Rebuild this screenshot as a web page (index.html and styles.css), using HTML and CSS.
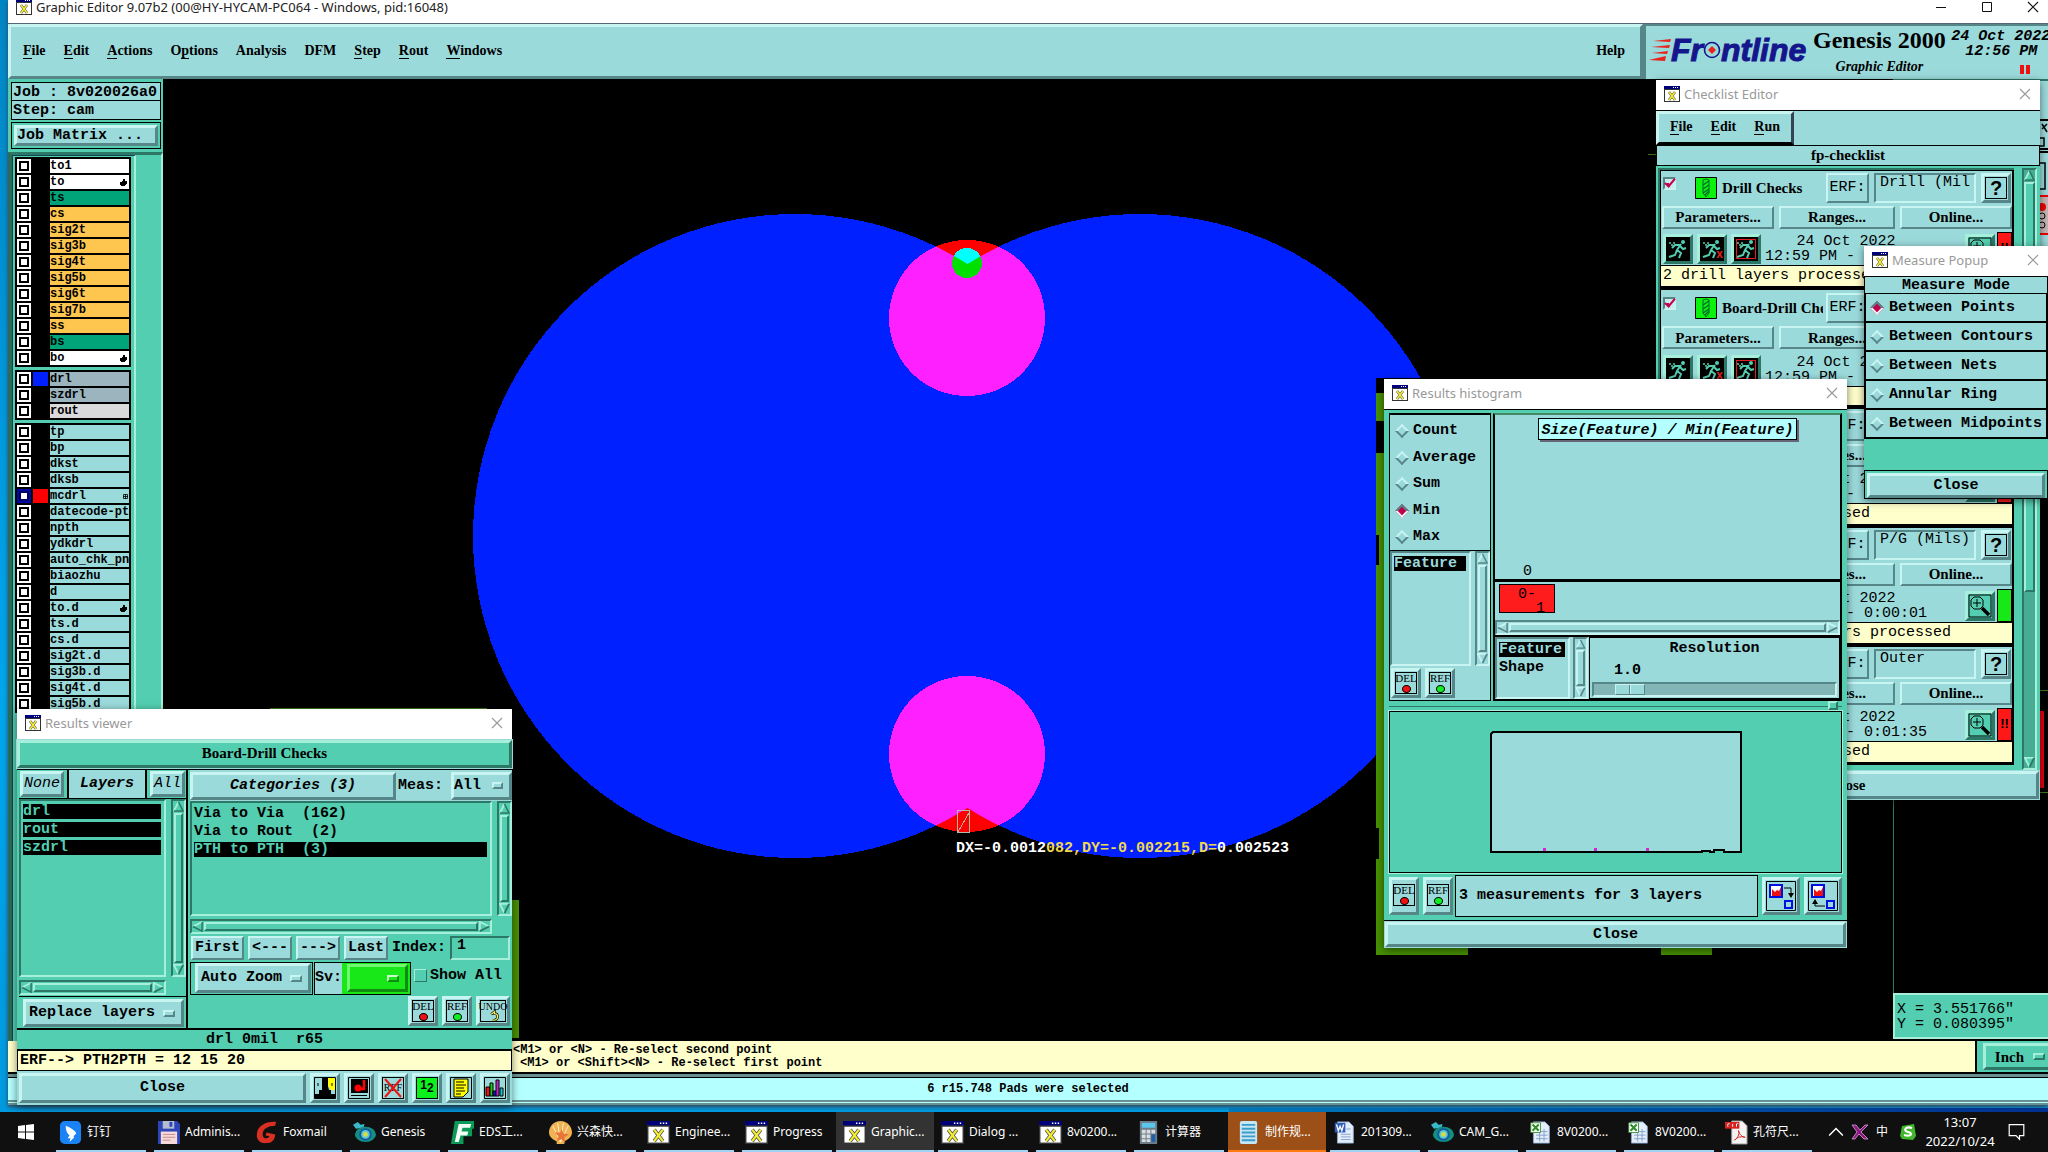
FILE: index.html
```html
<!DOCTYPE html>
<html lang="en">
<head>
<meta charset="utf-8">
<title>Graphic Editor 9.07b2</title>
<link rel="stylesheet" href="styles.css">
</head>
<body>
<svg class="defs" aria-hidden="true">
  <symbol id="xwin" viewBox="0 0 16 16"><path d="M0 0h16v16H0z" fill="#333"/><path d="M1 4h14v11H1z" fill="#fff"/><path d="M0 0h16v3H0z" fill="#00007c"/><path d="M9 1h1v1H9zM11 1h1v1h-1zM13 1h1v1h-1z" fill="#fff"/><path d="M5 6l6 8M11 6l-6 8" stroke="#555" stroke-width="2.600"/><path d="M5 6l6 8M11 6l-6 8" stroke="#f5ee30" stroke-width="1.500"/></symbol>
  <symbol id="close" viewBox="0 0 12 12"><path d="M1 1l10 10M11 1L1 11" stroke="currentColor" stroke-width="1.1" fill="none"/></symbol>
  <symbol id="up" viewBox="0 0 12 12"><path d="M6 1L1 11H11z" fill="var(--face)"/><path d="M6 1L1 11" stroke="var(--lite)" stroke-width="2"/><path d="M1 11H11L6 1" stroke="var(--dark)" stroke-width="1.6" fill="none"/></symbol>
  <symbol id="down" viewBox="0 0 12 12"><path d="M1 1H11L6 11z" fill="var(--face)"/><path d="M6 11L1 1H11" stroke="var(--lite)" stroke-width="2" fill="none"/><path d="M11 1L6 11" stroke="var(--dark)" stroke-width="2"/></symbol>
  <symbol id="left" viewBox="0 0 12 12"><path d="M1 6L11 1V11z" fill="var(--face)"/><path d="M1 6L11 1" stroke="var(--lite)" stroke-width="2"/><path d="M1 6L11 11V1" stroke="var(--dark)" stroke-width="1.6" fill="none"/></symbol>
  <symbol id="right" viewBox="0 0 12 12"><path d="M11 6L1 1V11z" fill="var(--face)"/><path d="M1 11V1L11 6" stroke="var(--lite)" stroke-width="2" fill="none"/><path d="M1 11L11 6" stroke="var(--dark)" stroke-width="2"/></symbol>
  <symbol id="hand" viewBox="0 0 7 8"><path d="M3 0h2v2h2v3H6v1H5v1H1V6H0V3h2V2h1z"/></symbol>
  <symbol id="drill" viewBox="0 0 22 22"><path d="M.5.5h21v21H.5z" fill="#0cf20c" stroke="#000"/><path d="M8 3l3-1 3 1v13l-3 4-3-4z" fill="#0cf20c" stroke="#063"/><path d="M8 8l6-4M8 12l6-4M8 16l6-4M10 18l4-4" stroke="#063" stroke-width="1.3"/></symbol>
  <symbol id="runner" viewBox="0 0 24 24"><path d="M0 0h24v24H0z"/><circle cx="17" cy="5" r="2" fill="#54ceb0"/><path d="M15 7l-4 6 4 3-2 5M11 13l-2 5-6 2M14 8l-5 0-3 3M14 9l3 3 3-1" stroke="#54ceb0" stroke-width="2" fill="none"/><path d="M3 6h2M7 6h2M5 8h2" stroke="#54ceb0" stroke-width="1.4"/></symbol>
  <symbol id="zoomer" viewBox="0 0 24 24"><path d="M1 1h22v22H1z" fill="#54ceb0" stroke="#000"/><path d="M6 3h6l3 3v6l-3 3H6l-3-3V6z" fill="none" stroke="#000"/><path d="M9 5v8M5 9h8" stroke="#000"/><path d="M14 14l7 7" stroke="#000" stroke-width="3.5"/></symbol>
  <symbol id="cam" viewBox="0 0 24 24"><path d="M0 4l5-3 3 3 4-1-1 4-8 1z" fill="#3ab7c8"/><ellipse cx="13" cy="14" rx="11" ry="8" fill="#128f80"/><circle cx="13" cy="14" r="6.5" fill="#1657a0"/><circle cx="13" cy="14" r="4.5" fill="#59c8d8"/><circle cx="13" cy="14" r="2.5" fill="#d9df3a"/></symbol>
  <symbol id="xls" viewBox="0 0 24 26"><path d="M4 1h13l5 5v19H4z" fill="#e4eefa" stroke="#8ba6cc"/><path d="M7 12h13M7 16h13M7 20h13M11 9v14M16 9v14" stroke="#7d9cc9"/><path d="M1 2h11v11H1z" fill="#fff" stroke="#3d8a38"/><path d="M3 4l7 7M10 4l-7 7" stroke="#2f8f2a" stroke-width="2.4"/></symbol>
</svg>

<div class="desktop">
<main class="app">
  <header class="titlebar main-title">
    <svg class="wicon"><use href="#xwin"/></svg><span>Graphic Editor 9.07b2 (00@HY-HYCAM-PC064 - Windows, pid:16048)</span>
    <div class="caption">
      <button aria-label="Minimize"><svg viewBox="0 0 12 12"><path d="M1 6.5h10" stroke="#111"/></svg></button>
      <button aria-label="Maximize"><svg viewBox="0 0 12 12"><path d="M1.500 1.500h9v9h-9z" stroke="#111" fill="none"/></svg></button>
      <button aria-label="Close"><svg><use href="#close"/></svg></button>
    </div>
  </header>
  <div class="toprow">
    <nav class="menubar">
      <a href="#"><u>F</u>ile</a><a href="#"><u>E</u>dit</a><a href="#"><u>A</u>ctions</a><a href="#">O<u>p</u>tions</a><a href="#">Analysis</a><a href="#">DFM</a><a href="#"><u>S</u>tep</a><a href="#"><u>R</u>out</a><a href="#"><u>W</u>indows</a>
      <a href="#" class="help">Help</a>
    </nav>
    <div class="brand">
      <div class="logo"><svg class="speed" viewBox="0 0 22 24"><path d="M4 3L22 1l-1 3zM2 9l19-2-1 3zM3 15l16-2-1 3zM0 22l17-4-1 5z" fill="#e8231c"/></svg><span>Fr</span><svg class="target" viewBox="0 0 18 20"><circle cx="9" cy="10" r="7.500" fill="none" stroke="#15158c" stroke-width="1.600"/><path d="M9 6l4 4-4 4-4-4z" fill="#e8231c"/></svg><span>ntline</span></div>
      <div class="product"><strong>Genesis 2000</strong><em>Graphic Editor</em></div>
      <div class="stamp"><span>24 Oct 2022</span><span class="r">12:56 PM</span><i class="pause"></i></div>
    </div>
  </div>
  <div class="work">
    <aside class="side">
      <div class="jobbox">Job : 8v020026a0</div>
      <div class="jobbox">Step: cam</div>
      <div class="matrix"><button class="btn">Job Matrix ...</button></div>
      <div class="layerpane">
        <div class="layers">
          <ul>
            <li class="w"><input type="checkbox" aria-label="to1"><i></i><span>to1</span></li>
            <li class="w"><input type="checkbox" aria-label="to"><i></i><span>to<svg class="hand"><use href="#hand"/></svg></span></li>
            <li class="g"><input type="checkbox" aria-label="ts"><i></i><span>ts</span></li>
            <li class="o"><input type="checkbox" aria-label="cs"><i></i><span>cs</span></li>
            <li class="o"><input type="checkbox" aria-label="sig2t"><i></i><span>sig2t</span></li>
            <li class="o"><input type="checkbox" aria-label="sig3b"><i></i><span>sig3b</span></li>
            <li class="o"><input type="checkbox" aria-label="sig4t"><i></i><span>sig4t</span></li>
            <li class="o"><input type="checkbox" aria-label="sig5b"><i></i><span>sig5b</span></li>
            <li class="o"><input type="checkbox" aria-label="sig6t"><i></i><span>sig6t</span></li>
            <li class="o"><input type="checkbox" aria-label="sig7b"><i></i><span>sig7b</span></li>
            <li class="o"><input type="checkbox" aria-label="ss"><i></i><span>ss</span></li>
            <li class="g"><input type="checkbox" aria-label="bs"><i></i><span>bs</span></li>
            <li class="w"><input type="checkbox" aria-label="bo"><i></i><span>bo<svg class="hand"><use href="#hand"/></svg></span></li>
          </ul>
          <ul>
            <li class="s blue"><input type="checkbox" aria-label="drl"><i></i><span>drl</span></li>
            <li class="s"><input type="checkbox" aria-label="szdrl"><i></i><span>szdrl</span></li>
            <li class="l"><input type="checkbox" aria-label="rout"><i></i><span>rout</span></li>
          </ul>
          <ul>
            <li><input type="checkbox" aria-label="tp"><i></i><span>tp</span></li>
            <li><input type="checkbox" aria-label="bp"><i></i><span>bp</span></li>
            <li><input type="checkbox" aria-label="dkst"><i></i><span>dkst</span></li>
            <li><input type="checkbox" aria-label="dksb"><i></i><span>dksb</span></li>
            <li class="red"><input type="checkbox" checked aria-label="mcdrl"><i></i><span>mcdrl<svg class="snap" viewBox="0 0 5 5"><path d="M.5.5h4v4h-4zM2.500 0v5M0 2.500h5" fill="none" stroke="#000" stroke-width=".8"/></svg></span></li>
            <li><input type="checkbox" aria-label="datecode-ptd"><i></i><span>datecode-ptd</span></li>
            <li><input type="checkbox" aria-label="npth"><i></i><span>npth</span></li>
            <li><input type="checkbox" aria-label="ydkdrl"><i></i><span>ydkdrl</span></li>
            <li><input type="checkbox" aria-label="auto_chk_pnl"><i></i><span>auto_chk_pnl</span></li>
            <li><input type="checkbox" aria-label="biaozhu"><i></i><span>biaozhu</span></li>
            <li><input type="checkbox" aria-label="d"><i></i><span>d</span></li>
            <li><input type="checkbox" aria-label="to.d"><i></i><span>to.d<svg class="hand"><use href="#hand"/></svg></span></li>
            <li><input type="checkbox" aria-label="ts.d"><i></i><span>ts.d</span></li>
            <li><input type="checkbox" aria-label="cs.d"><i></i><span>cs.d</span></li>
            <li><input type="checkbox" aria-label="sig2t.d"><i></i><span>sig2t.d</span></li>
            <li><input type="checkbox" aria-label="sig3b.d"><i></i><span>sig3b.d</span></li>
            <li><input type="checkbox" aria-label="sig4t.d"><i></i><span>sig4t.d</span></li>
            <li><input type="checkbox" aria-label="sig5b.d"><i></i><span>sig5b.d</span></li>
          </ul>
        </div>
      </div>
    </aside>
    <section class="canvas">
      <svg class="board" shape-rendering="crispEdges">
        <defs><clipPath id="pads"><circle cx="795" cy="536" r="322"/><circle cx="1140" cy="536" r="322"/></clipPath></defs>
        <g transform="translate(-163 -79)">
          <g fill="#0020ff"><circle cx="795" cy="536" r="322"/><circle cx="1140" cy="536" r="322"/></g>
          <g fill="#f00"><circle cx="967" cy="318" r="78"/><circle cx="967" cy="754" r="78"/></g>
          <g fill="#ff20ff" clip-path="url(#pads)"><circle cx="967" cy="318" r="78"/><circle cx="967" cy="754" r="78"/></g>
          <circle cx="967" cy="263" r="15" fill="#0ff"/><circle cx="967" cy="263" r="15" fill="#00e000" clip-path="url(#pads)"/>
          <path d="M957.500 810.500h12v22h-12zM958 832l12-21" fill="none" stroke="#b8b8a0"/>
          <path d="M1376 378h300v577h-300z" fill="#000"/>
          <path d="M1376 393h300v28h-300zM1376 453h300v82h-300zM1379 535h300v30h-300zM1376 565h300v263h-300zM1379 828h300v31h-300zM1376 859h92v96h-92zM1661 859h51v96h-51zM512 900h7v138h-7z" fill="#469000"/>
          <path d="M270 708.500h217M1648 154.500h10M2040 690.500h8M2040 792.500h8" stroke="#3c7818"/>
          <path d="M2038 711h6v77h-6z" fill="#e00010"/>
        </g>
      </svg>
      <p class="readout">DX=-0.0012<span>082,DY=-0.002215,D=</span>0.002523</p>
      <div class="rightcol">
        <div class="tools">
          <div class="toolgap"></div>
          <svg viewBox="0 0 8 126"><path d="M0 1h8M0 30h8M0 33h8" stroke="#000" stroke-width="2"/><path d="M2 10l5-5M2 5l5 8M0 19h4v8H0M0 44h5v26H0" fill="none" stroke="#000" stroke-width="1.500"/><path d="M0 76h8v39H0z" fill="#c4b4b4"/><path d="M0 77h8M0 115h8" stroke="#e00" stroke-width="2"/><circle cx="2" cy="88" r="4" fill="#e00"/><circle cx="2" cy="97" r="3" fill="none" stroke="#000"/><circle cx="2" cy="106" r="3" fill="none" stroke="#000"/></svg>
        </div>
        <div class="overview"></div>
        <div class="coords"><span>X = 3.551766"</span><span>Y = 0.080395"</span></div>
      </div>
    </section>
  </div>
  <div class="msgrow">
    <div class="messages"><span>&lt;M1&gt; or &lt;N&gt; - Re-select second point</span><span class="second">&lt;M1&gt; or &lt;Shift&gt;&lt;N&gt; - Re-select first point</span></div>
    <div class="units teal"><button class="btn opt">Inch<i></i></button></div>
  </div>
  <div class="status">6 r15.748 Pads were selected</div>
</main>

<section class="win checklist">
  <header class="titlebar"><svg class="wicon"><use href="#xwin"/></svg><span>Checklist Editor</span><button aria-label="Close"><svg><use href="#close"/></svg></button></header>
  <div class="clmenu"><nav><a href="#"><u>F</u>ile</a><a href="#"><u>E</u>dit</a><a href="#"><u>R</u>un</a></nav></div>
  <h2>fp-checklist</h2>
  <div class="clbody">
    <div class="items">
      <article>
        <div class="r1"><input type="checkbox" checked aria-label="Drill Checks"><svg class="drill"><use href="#drill"/></svg><b>Drill Checks</b><button class="btn">ERF:</button><input class="field" value="Drill (Mil" aria-label="ERF model"><button class="btn help"><span>?</span></button></div>
        <div class="r2"><button class="btn">Parameters...</button><button class="btn">Ranges...</button><button class="btn">Online...</button></div>
        <div class="r3"><button class="btn teal" aria-label="Run"><svg><use href="#runner"/></svg></button><button class="btn teal k1" aria-label="Run on area"><svg><use href="#runner"/></svg></button><button class="btn teal k2" aria-label="Run on profile"><svg><use href="#runner"/></svg></button><p>24 Oct 2022<br>12:59 PM - 0:00:01</p><button class="btn teal" aria-label="View results"><svg><use href="#zoomer"/></svg></button><i class="bad">!!</i></div>
        <div class="r4">2 drill layers processed</div>
      </article>
      <article>
        <div class="r1"><input type="checkbox" checked aria-label="Board-Drill Checks"><svg class="drill"><use href="#drill"/></svg><b>Board-Drill Checks</b><button class="btn">ERF:</button><input class="field" value="Outer" aria-label="ERF model"><button class="btn help"><span>?</span></button></div>
        <div class="r2"><button class="btn">Parameters...</button><button class="btn">Ranges...</button><button class="btn">Online...</button></div>
        <div class="r3"><button class="btn teal" aria-label="Run"><svg><use href="#runner"/></svg></button><button class="btn teal k1" aria-label="Run on area"><svg><use href="#runner"/></svg></button><button class="btn teal k2" aria-label="Run on profile"><svg><use href="#runner"/></svg></button><p>24 Oct 2022<br>12:59 PM - 0:00:03</p><button class="btn teal" aria-label="View results"><svg><use href="#zoomer"/></svg></button><i class="bad">!!</i></div>
        <div class="r4"></div>
      </article>
      <article>
        <div class="r1"><input type="checkbox" checked aria-label="Signal Checks"><svg class="drill"><use href="#drill"/></svg><b></b><button class="btn">ERF:</button><input class="field" value="" aria-label="ERF model"><button class="btn help"><span>?</span></button></div>
        <div class="r2"><button class="btn">Parameters...</button><button class="btn">Ranges...</button><button class="btn">Online...</button></div>
        <div class="r3"><button class="btn teal" aria-label="Run"><svg><use href="#runner"/></svg></button><button class="btn teal k1" aria-label="Run on area"><svg><use href="#runner"/></svg></button><button class="btn teal k2" aria-label="Run on profile"><svg><use href="#runner"/></svg></button><p>24 Oct 2022<br>12:59 PM - 0:00:07</p><button class="btn teal" aria-label="View results"><svg><use href="#zoomer"/></svg></button><i class="bad">!!</i></div>
        <div class="r4">signal layers processed</div>
      </article>
      <article>
        <div class="r1"><input type="checkbox" checked aria-label="P/G Checks"><svg class="drill"><use href="#drill"/></svg><b></b><button class="btn">ERF:</button><input class="field" value="P/G (Mils)" aria-label="ERF model"><button class="btn help"><span>?</span></button></div>
        <div class="r2"><button class="btn">Parameters...</button><button class="btn">Ranges...</button><button class="btn">Online...</button></div>
        <div class="r3"><button class="btn teal" aria-label="Run"><svg><use href="#runner"/></svg></button><button class="btn teal k1" aria-label="Run on area"><svg><use href="#runner"/></svg></button><button class="btn teal k2" aria-label="Run on profile"><svg><use href="#runner"/></svg></button><p>24 Oct 2022<br>12:59 PM - 0:00:01</p><button class="btn teal" aria-label="View results"><svg><use href="#zoomer"/></svg></button><i class="good"></i></div>
        <div class="r4">No power-ground layers processed</div>
      </article>
      <article>
        <div class="r1"><input type="checkbox" checked aria-label="Mask Checks"><svg class="drill"><use href="#drill"/></svg><b></b><button class="btn">ERF:</button><input class="field" value="Outer" aria-label="ERF model"><button class="btn help"><span>?</span></button></div>
        <div class="r2"><button class="btn">Parameters...</button><button class="btn">Ranges...</button><button class="btn">Online...</button></div>
        <div class="r3"><button class="btn teal" aria-label="Run"><svg><use href="#runner"/></svg></button><button class="btn teal k1" aria-label="Run on area"><svg><use href="#runner"/></svg></button><button class="btn teal k2" aria-label="Run on profile"><svg><use href="#runner"/></svg></button><p>24 Oct 2022<br>12:59 PM - 0:01:35</p><button class="btn teal" aria-label="View results"><svg><use href="#zoomer"/></svg></button><i class="bad">!!</i></div>
        <div class="r4">2 mask layers processed</div>
      </article>
    </div>
    <div class="vsb teal tall"><svg><use href="#up"/></svg><i></i><svg class="end"><use href="#down"/></svg></div>
  </div>
  <button class="btn wclose">Close</button>
</section>

<section class="win measure">
  <header class="titlebar"><svg class="wicon"><use href="#xwin"/></svg><span>Measure Popup</span><button aria-label="Close"><svg><use href="#close"/></svg></button></header>
  <h2>Measure Mode</h2>
  <label><input type="radio" name="mm" checked>Between Points</label>
  <label><input type="radio" name="mm">Between Contours</label>
  <label><input type="radio" name="mm">Between Nets</label>
  <label><input type="radio" name="mm">Annular Ring</label>
  <label><input type="radio" name="mm">Between Midpoints</label>
  <div class="mclose"><button class="btn">Close</button></div>
</section>

<section class="win histo">
  <header class="titlebar"><svg class="wicon"><use href="#xwin"/></svg><span>Results histogram</span><button aria-label="Close"><svg><use href="#close"/></svg></button></header>
  <div class="hbody">
    <div class="htop">
      <div class="hleft">
        <div class="radios">
          <label><input type="radio" name="agg">Count</label>
          <label><input type="radio" name="agg">Average</label>
          <label><input type="radio" name="agg">Sum</label>
          <label><input type="radio" name="agg" checked>Min</label>
          <label><input type="radio" name="agg">Max</label>
        </div>
        <div class="hlist"><ul class="sunk"><li class="sel">Feature</li></ul><div class="vsb"><svg><use href="#up"/></svg><i></i><svg><use href="#down"/></svg></div></div>
        <div class="tags"><button class="btn tag del"><span>DEL</span></button><button class="btn tag ref"><span>REF</span></button></div>
      </div>
      <div class="hright">
        <div class="chart"><em>Size(Feature) / Min(Feature)</em><span>0</span></div>
        <div class="axis"><div>0-<br>&nbsp; 1</div></div>
        <div class="hsb"><svg><use href="#left"/></svg><i></i><svg><use href="#right"/></svg></div>
        <div class="hlow">
          <ul class="sunk"><li class="sel">Feature</li><li>Shape</li></ul>
          <div class="vsb"><svg><use href="#up"/></svg><i></i><svg><use href="#down"/></svg></div>
          <div class="reso"><label for="res">Resolution</label><output>1.0</output><input id="res" type="range" min="0" max="10" value="1"></div>
        </div>
      </div>
    </div>
    <div class="sash"><i></i></div>
    <div class="map"><svg viewBox="0 0 252 122"><path d="M3 1h248v120h-17v-2h-10v2h-4v-1h-8v1H1V3z" fill="#9bdadb" stroke="#000" stroke-width="2"/><path d="M53 117h3v3h-3zM104 117h3v3h-3zM156 117h3v3h-3z" fill="#d028d0"/></svg></div>
    <div class="hfoot"><button class="btn tag del"><span>DEL</span></button><button class="btn tag ref"><span>REF</span></button><p>3 measurements for 3 layers</p>
      <button class="btn ic" aria-label="Next"><svg viewBox="0 0 30 30"><path d="M.5.5h29v29H.5z" fill="none" stroke="#000"/><path d="M4 4h12v12H4z" fill="#fff" stroke="#0010e0" stroke-width="2"/><path d="M6 15V8l3 3 2-2 2 1 2-4v9z" fill="#e11"/><path d="M19 20h7v7h-7z" fill="none" stroke="#0010e0" stroke-width="2"/><path d="M18 7h7v8" fill="none" stroke="#000"/><path d="M22 12l3 5 3-5z"/></svg></button>
      <button class="btn ic" aria-label="Previous"><svg viewBox="0 0 30 30"><path d="M.5.5h29v29H.5z" fill="none" stroke="#000"/><path d="M4 4h12v12H4z" fill="#fff" stroke="#0010e0" stroke-width="2"/><path d="M6 15V8l3 3 2-2 2 1 2-4v9z" fill="#e11"/><path d="M19 20h7v7h-7z" fill="none" stroke="#0010e0" stroke-width="2"/><path d="M17 25H7v-5" fill="none" stroke="#000"/><path d="M4 23l3-5 3 5z"/></svg></button>
    </div>
  </div>
  <button class="btn wclose">Close</button>
</section>

<section class="win viewer teal">
  <header class="titlebar"><svg class="wicon"><use href="#xwin"/></svg><span>Results viewer</span><button aria-label="Close"><svg><use href="#close"/></svg></button></header>
  <h2>Board-Drill Checks</h2>
  <div class="vbody">
    <div class="vleft">
      <div class="vhead"><button class="btn cy it">None</button><em>Layers</em><button class="btn cy it">All</button></div>
      <div class="vlist"><ul class="sunk"><li class="sel">drl</li><li class="sel">rout</li><li class="sel">szdrl</li></ul><div class="vsb"><svg><use href="#up"/></svg><i></i><svg><use href="#down"/></svg></div></div>
      <div class="hsb"><svg><use href="#left"/></svg><i></i><svg><use href="#right"/></svg></div>
      <div class="vrep"><button class="btn cy opt">Replace layers<i></i></button></div>
    </div>
    <div class="vright">
      <div class="chead cyan"><button class="btn cat"><em>Categories (3)</em></button><span>Meas:</span><button class="btn opt">All<i></i></button></div>
      <div class="vlist"><ul class="sunk"><li>Via to Via&nbsp; (162)</li><li>Via to Rout&nbsp; (2)</li><li class="sel">PTH to PTH&nbsp; (3)</li></ul><div class="vsb"><svg><use href="#up"/></svg><i></i><svg><use href="#down"/></svg></div></div>
      <div class="hsb"><svg><use href="#left"/></svg><i></i><svg><use href="#right"/></svg></div>
      <div class="navrow"><button class="btn cy">First</button><button class="btn cy">&lt;---</button><button class="btn cy">---&gt;</button><button class="btn cy">Last</button><label for="idx">Index:</label><input id="idx" class="field" value="1"></div>
      <div class="zoomrow"><div class="cell az"><button class="btn cy opt">Auto Zoom<i></i></button></div><div class="cell sv cyan"><span>Sv:</span><div class="lime"><button class="btn opt" aria-label="Severity"><i></i></button></div></div><label><input type="checkbox">Show All</label></div>
      <div class="tags"><button class="btn cy tag del"><span>DEL</span></button><button class="btn cy tag ref"><span>REF</span></button><button class="btn cy tag undo"><span>UNDO</span><svg viewBox="0 0 10 12"><path d="M1 4l4-3v2c5 0 5 7 0 8H3" fill="none" stroke="#000" stroke-width="3"/><path d="M1 4l4-3v2c5 0 5 7 0 8H3" fill="none" stroke="#f2f25a" stroke-width="1.500"/></svg></button></div>
    </div>
  </div>
  <p class="info">drl 0mil&nbsp; r65</p>
  <p class="erf">ERF--&gt; PTH2PTH = 12 15 20</p>
  <footer class="cyan">
    <button class="btn close">Close</button>
    <button class="btn" aria-label="Contrast"><svg viewBox="0 0 22 22"><path d="M.5.5h21v21H.5z" fill="#9bdadb" stroke="#000"/><path d="M8 1h6v20H1v-4h4v-4h3z"/><path d="M14 1h7v12h-4l-3-4z" fill="#ff0"/><path d="M5 17h12v-4h-2l-2-7h-3l-2 7H6zM1 17h20v4H1z"/><path d="M4 6v3M18 6v3" stroke="#000"/></svg></button>
    <button class="btn" aria-label="Detail"><svg viewBox="0 0 22 22"><path d="M.5.5h21v21H.5z" fill="#9bdadb" stroke="#000"/><path d="M3 2h17v14H3z"/><circle cx="10" cy="11" r="3.500" fill="#f00"/><path d="M9 12h7V3" stroke="#f00" stroke-width="2.500" fill="none"/><path d="M3 18.500h16" stroke="#000"/></svg></button>
    <button class="btn strike" aria-label="Clear reference"><span>REF</span><svg viewBox="0 0 22 22"><path d="M3 2l16 18M19 2L3 20" stroke="#e11" stroke-width="2"/></svg></button>
    <button class="btn num" aria-label="Report counts"><span>1<sub>2</sub></span></button>
    <button class="btn" aria-label="Notes"><svg viewBox="0 0 22 22"><path d="M.5.500h21v21H.5z" fill="none" stroke="#000"/><path d="M4 2h14v13l-5 5H4z" fill="#ff0" stroke="#000"/><path d="M6 5h8M6 8h10M6 11h8M6 14h9M6 17h5" stroke="#000"/></svg></button>
    <button class="btn" aria-label="Histogram"><svg viewBox="0 0 22 22"><path d="M.5.500h21v21H.5z" fill="none" stroke="#000"/><path d="M2 10h4v9H2z" fill="#e11" stroke="#000"/><path d="M6 6h3v13H6z" fill="#1c1" stroke="#000"/><path d="M9 14h3v5H9z" fill="#11d" stroke="#000"/><path d="M12 3h3v16h-3z" fill="#c2c" stroke="#000"/><path d="M16 11h3v8h-3z" fill="#1cc" stroke="#000"/></svg></button>
  </footer>
</section>

<footer class="taskbar">
  <button class="start" aria-label="Start"><svg viewBox="0 0 16 16"><path d="M0 2l7-1v6.500H0zM8 1l8-1v7.500H8zM0 8.500h7V15l-7-1zM8 8.500h8V16l-8-1z" fill="#fff"/></svg></button>
  <button class="task"><svg viewBox="0 0 24 24"><rect x="1" width="22" height="24" rx="5" fill="#1b82f5"/><path d="M7 5c5 2 10 5 11 8l-3 3 1 1-5 5 1-4H9l2-3c-3-2-4-6-4-10z" fill="#fff"/></svg><span>钉钉</span></button>
  <button class="task"><svg viewBox="0 0 24 24"><path d="M1 0h20l3 3v21H1z" fill="#2c44b8"/><path d="M6 0h12v8H6z" fill="#b4bcd0"/><path d="M13 1h3v5h-3z" fill="#2c44b8"/><path d="M4 11h17v13H4z" fill="#f4dada"/><path d="M6 14h13M6 17h13M6 20h8" stroke="#c88"/></svg><span>Adminis...</span></button>
  <button class="task"><svg viewBox="0 0 24 24"><path d="M22 1C12 0 3 5 2 13c-1 7 4 11 10 10 6 0 9-4 9-9l-9-2-1 3 4 1c-1 3-7 3-7-2 0-6 6-9 13-9z" fill="#d93022"/></svg><span>Foxmail</span></button>
  <button class="task"><svg><use href="#cam"/></svg><span>Genesis</span></button>
  <button class="task"><svg viewBox="0 0 24 24"><path d="M4 0h20v8h-2v8h-9v8H0z" fill="#0b9a57"/><path d="M8 3h13l-1 4h-8l-1 4h7l-1 4h-7l-2 7H4z" fill="#f4fff8"/></svg><span>EDS工...</span></button>
  <button class="task"><svg viewBox="0 0 24 24"><path d="M12 0c7 0 12 6 12 12 0 5-5 8-8 9v3H8v-3c-3-1-8-4-8-9C0 6 5 0 12 0z" fill="#f0b253"/><path d="M12 22L4 5M12 22L9 2M12 22l3-20M12 22l8-17" stroke="#fff0c8"/><path d="M13 8l2 5 6 1-5 3 1 6-4-4-5 2 2-5-4-4 6 0z" fill="#e8743a"/></svg><span>兴森快...</span></button>
  <button class="task"><svg><use href="#xwin"/></svg><span>Enginee...</span></button>
  <button class="task"><svg><use href="#xwin"/></svg><span>Progress</span></button>
  <button class="task on"><svg><use href="#xwin"/></svg><span>Graphic...</span></button>
  <button class="task"><svg><use href="#xwin"/></svg><span>Dialog ...</span></button>
  <button class="task"><svg><use href="#xwin"/></svg><span>8v0200...</span></button>
  <button class="task"><svg viewBox="0 0 24 24"><path d="M3 0h18v24H3z" fill="#707c86"/><path d="M5 2h14v5H5z" fill="#5ac8ee"/><path d="M5 9h4v4H5zM10 9h4v4h-4zM15 9h4v4h-4zM5 14h4v4H5zM10 14h4v4h-4zM5 19h4v3H5zM10 19h4v3h-4z" fill="#d8dde2"/><path d="M15 14h4v8h-4z" fill="#1b62a8"/></svg><span>计算器</span></button>
  <button class="task alert"><svg viewBox="0 0 24 24"><rect x="3" width="18" height="24" rx="2" fill="#c5e6f4"/><path d="M5 4h14M5 8h14M5 12h14M5 16h14M5 20h14" stroke="#3b9cc8" stroke-width="2"/></svg><span>制作规...</span></button>
  <button class="task"><svg viewBox="0 0 24 26"><path d="M4 1h13l5 5v19H4z" fill="#e4eefa" stroke="#8ba6cc"/><path d="M8 15h11M8 18h11M8 21h11M14 9h5" stroke="#7d9cc9"/><path d="M1 2h12v11H1z" fill="#2f5fb8"/><path d="M3 4l2 7 2-5 2 5 2-7" stroke="#fff" stroke-width="1.500" fill="none"/></svg><span>201309...</span></button>
  <button class="task"><svg><use href="#cam"/></svg><span>CAM_G...</span></button>
  <button class="task"><svg><use href="#xls"/></svg><span>8V0200...</span></button>
  <button class="task"><svg><use href="#xls"/></svg><span>8V0200...</span></button>
  <button class="task"><svg viewBox="0 0 24 24"><path d="M7 0h11l5 5v19H7z" fill="#f3f3f3" stroke="#999"/><path d="M0 1h15v7H0z" fill="#d8201c"/><path d="M3 6V3h2M8 3v3M12 6V3h2" stroke="#fff"/><path d="M14 10c2 4-2 9-4 10 3-4 8-4 11-3-3 0-6-3-7-7z" fill="none" stroke="#d8201c"/></svg><span>孔符尺...</span></button>
  <div class="tray">
    <svg viewBox="0 0 14 14"><path d="M1 10l6-6 6 6" fill="none" stroke="#fff" stroke-width="1.300"/></svg>
    <svg viewBox="0 0 16 14"><path d="M0 0h4l4 5 5-5h3L9 7l7 7h-4L7 9l-4 5H0l5-7z" fill="#8a1a80" stroke="#d9a0d4" stroke-width=".8"/></svg>
    <span>中</span>
    <svg class="ime" viewBox="0 0 16 16"><path d="M2 2l12-2 2 12-3 4-11-1-2-3z" fill="#42b62c"/><path d="M12 4c-7-2-9 3-4 4s4 5-4 3" fill="none" stroke="#fff" stroke-width="2.200"/></svg>
    <time><span>13:07</span><span>2022/10/24</span></time>
    <svg class="note" viewBox="0 0 16 16"><path d="M.7.7h14.600v11H11v3.500L7.500 11.700H.7z" fill="none" stroke="#fff" stroke-width="1.200"/></svg>
  </div>
</footer>
</div>
</body>
</html>
```
FILE: styles.css
```css
* { box-sizing: border-box; margin: 0; padding: 0; }
:root { --cyan: #9bdadb; --teal: #54ceb0; --cream: #ffffcc; }
body {
  --face: var(--cyan); --lite: #c8f4f2; --dark: #568688;
  font: bold 15px/18px "Liberation Mono", "Courier New", monospace;
  color: #000; background: #000; overflow: hidden;
}
.defs { position: absolute; width: 0; height: 0; }
.teal { --face: var(--teal); --lite: #a6efdb; --dark: #2c7766; background-color: var(--teal); }
.cyan, .cy { --face: var(--cyan); --lite: #c8f4f2; --dark: #568688; background-color: var(--cyan); }
ul { list-style: none; }
a { color: inherit; text-decoration: none; }
u { text-decoration: none; border-bottom: 1px solid #000; }
button, input { font: inherit; color: inherit; }
button { background: none; border: 0; white-space: nowrap; }
svg { display: block; flex: none; overflow: visible; }

.desktop {
  position: relative; height: 100vh; display: flex; flex-direction: column;
  background: linear-gradient(#0085c4, #00a6ee 60%, #0098de);
}
.app {
  flex: 1; min-height: 0; margin: 0 0 7px 8px; display: flex; flex-direction: column;
  background: #000; box-shadow: 0 2px 4px #345;
}
.desktop::after {
  content: ""; position: absolute; left: 60%; right: 0; bottom: 40px; height: 4px;
  background: linear-gradient(90deg, #0078b8, #003090);
}

/* buttons, bars and other shared controls */
.btn {
  background: var(--face); border: 3px solid; padding: 0;
  border-color: var(--lite) var(--dark) var(--dark) var(--lite);
  display: flex; align-items: center; justify-content: center;
}
.opt { justify-content: flex-end; gap: 11px; padding-right: 6px; }
.opt i { width: 12px; height: 7px; border: 2px solid; border-color: var(--lite) var(--dark) var(--dark) var(--lite); }
.sunk { border: 2px solid; border-color: var(--dark) var(--lite) var(--lite) var(--dark); background: var(--face); }
.sunk li { line-height: 15px; margin: 3px 3px 0 2px; white-space: pre; }
.sel { background: #000; color: var(--face); }
.field {
  border: 2px solid; border-color: var(--dark) var(--lite) var(--lite) var(--dark);
  background: var(--face); padding: 0 0 10px 4px; min-width: 0;
}
.vsb, .hsb { display: flex; border: 2px solid; border-color: var(--dark) var(--lite) var(--lite) var(--dark); background: var(--face); }
.vsb { flex-direction: column; width: 15px; flex: none; }
.hsb { height: 15px; }
.vsb svg, .hsb svg { width: 11px; height: 11px; }
.vsb i, .hsb i { flex: 1; margin: 1px; border: 2px solid; border-color: var(--lite) var(--dark) var(--dark) var(--lite); }
.tag { width: 30px; height: 30px; flex-direction: column; justify-content: flex-start; padding: 1px; }
.tag span {
  border: 1px solid #000; width: 22px; height: 22px; font: 11px/11px "Liberation Serif", serif;
  display: flex; flex-direction: column; align-items: center;
}
.tag span::after { content: ""; width: 7px; height: 7px; border-radius: 50%; border: 1px solid #000; background: #e11; margin-top: 1px; }
.ref span::after { background: #1e2; }
.undo { width: 34px; position: relative; }
.undo span { width: 26px; font-size: 10px; }
.undo span::after { display: none; }
.undo svg { position: absolute; left: 11px; top: 12px; width: 9px; height: 10px; }
input[type=radio] {
  appearance: none; width: 10px; height: 10px; transform: rotate(45deg); flex: none;
  border: 2px solid; border-color: var(--lite) var(--dark) var(--dark) var(--lite);
}
input[type=radio]:checked { background: #c0004c; border-color: #568688 #e8f4f4 #e8f4f4 #568688; }

/* window frames */
.titlebar {
  display: flex; align-items: center; height: 31px; padding: 0 9px 2px 8px; background: #fff; color: #999;
  font: 13px/18px "Noto Sans", sans-serif; border-bottom: 1px solid #000;
}
.wicon { width: 16px; height: 16px; margin-right: 4px; }
.titlebar > button { margin-left: auto; width: 12px; height: 12px; }
.titlebar button svg { width: 12px; height: 12px; }
.main-title { height: 24px; color: #222; padding-bottom: 10px; border-color: #567; }
.caption { margin-left: auto; display: flex; gap: 34px; color: #111; }
.win { position: absolute; display: flex; flex-direction: column; background-color: var(--face); box-shadow: 0 2px 8px rgba(0, 0, 0, .5); }
.win h2 { font: bold 15px/20px "Liberation Serif", serif; text-align: center; }

/* main menu and banner */
.toprow { display: flex; height: 55px; background: var(--cyan); font: bold 14px/18px "Liberation Serif", serif; }
.menubar {
  flex: 1; display: flex; align-items: center; gap: 18px; padding: 0 15px 2px 12px;
  border: 3px solid; border-color: var(--lite) var(--dark) var(--dark) var(--lite);
}
.help { margin-left: auto; }
.brand { width: 405px; display: flex; padding: 1px 0 0 3px; border-left: 3px solid var(--dark); border-top: 2px solid var(--dark); overflow: hidden; }
.logo { display: flex; align-items: center; height: 46px; margin-right: 5px; color: #15158c; font: italic bold 32px/40px "Liberation Sans", Arial, sans-serif; -webkit-text-stroke: 1px #15158c; }
.speed { width: 22px; height: 24px; }
.target { width: 18px; height: 20px; }
.product { display: flex; flex-direction: column; align-items: center; width: 136px; flex: none; }
.product strong { font-size: 24px; line-height: 26px; white-space: nowrap; }
.product em { margin-top: 3px; font-size: 14px; line-height: 22px; }
.stamp { margin-left: 4px; padding-top: 2px; font: italic bold 15px/15px "Liberation Mono", monospace; white-space: nowrap; display: flex; flex-direction: column; }
.r { padding-left: 14px; }
.pause { width: 10px; height: 9px; margin: 6px 0 0 69px; border: solid #f01010; border-width: 0 4px; }

/* job and layer column */
.work { flex: 1; min-height: 0; display: flex; background: #000; }
.side { width: 155px; display: flex; flex-direction: column; background: var(--teal); padding-top: 3px; overflow: hidden; }
.jobbox { margin: 0 2px 0 3px; border: 1px solid #000; height: 19px; padding-left: 1px; background: var(--cyan); white-space: nowrap; overflow: hidden; line-height: 19px; }
.jobbox + .jobbox { border-top: 0; line-height: 20px; }
.matrix { margin: 2px 2px 3px 3px; border: 1px solid #000; height: 27px; padding: 2px; flex: none; }
.matrix .btn { width: 100%; height: 21px; justify-content: flex-start; }
.layerpane { flex: 1; min-height: 0; border-top: 3px solid #2c7766; border-left: 4px solid #2c6a5c; border-right: 2px solid #a6efdb; }
.layers { width: 124px; height: 100%; padding: 1px 3px 0 2px; border: solid; border-width: 1px 2px 0 1px; border-color: #145 #a6efdb #145 #145; display: flex; flex-direction: column; gap: 3px; }
.layers ul { background: #000; padding: 2px 2px 0; }
.layers li { display: grid; grid-template-columns: 14px 15px 1fr; column-gap: 2px; height: 14px; margin-bottom: 2px; --c: var(--cyan); }
.layers li span { background: var(--c); font: bold 12px/14px "Liberation Mono", monospace; overflow: hidden; white-space: nowrap; position: relative; }
.layers input { appearance: none; width: 14px; height: 14px; background: #fff; border: 2px solid #fff; outline: 2px solid #000; outline-offset: -4px; }
.layers input:checked { border-color: #0008a8; outline-color: #000060; }
.layers .w { --c: #fff; } .layers .g { --c: #00a478; } .layers .o { --c: #fec64e; }
.layers .s { --c: #9bb4be; } .layers .l { --c: #dadada; }
.blue i { background: #0020ff; } .red i { background: #f00; }
.hand, .snap { position: absolute; right: 2px; top: 4px; width: 7px; height: 8px; }
.snap { right: 1px; width: 5px; height: 5px; top: 5px; }

/* drawing area */
.canvas { flex: 1; position: relative; overflow: hidden; }
.board { position: absolute; width: 100%; height: 100%; }
.readout { position: absolute; left: 793px; top: 761px; color: #fff; white-space: pre; }
.readout span { color: #f0d850; }
.rightcol { position: absolute; right: 0; top: 0; bottom: 2px; width: 155px; display: flex; flex-direction: column; }
.tools { height: 167px; background: var(--cyan); border-top: 2px solid #2c7766; display: flex; flex-direction: column; align-items: flex-end; }
.toolgap { height: 38px; }
.tools svg { width: 8px; height: 126px; }
.overview { flex: 1; border-left: 1px solid #2c7766; }
.coords { height: 46px; border: 2px solid #a6efdb; border-width: 2px 0 2px 2px; background: var(--teal); padding: 7px 0 0 2px; display: flex; flex-direction: column; line-height: 15px; font-weight: normal; }
.msgrow { display: flex; height: 31px; background: #000; font-size: 12px; line-height: 13px; }
.messages { flex: 1; background: var(--cream); display: flex; flex-direction: column; padding: 3px 0 0 505px; margin-right: 2px; }
.messages .second { padding-left: 7px; }
.units { width: 71px; padding: 2px 0 2px 6px; overflow: hidden; }
.units .btn { width: 76px; height: 27px; gap: 9px; padding-right: 11px; font: bold 15px/18px "Liberation Serif", serif; }
.status { margin-top: 2px; height: 31px; background: #b4ffff; border: solid #689090; border-width: 3px 0; box-shadow: inset 0 1px #000; text-align: center; font-size: 12px; line-height: 25px; border-bottom: 5px double #689090; }

/* checklist */
.checklist { left: 1656px; top: 80px; width: 384px; height: 720px; }
.clmenu { height: 34px; flex: none; }
.clmenu nav { width: 138px; height: 34px; border: 3px solid; border-color: var(--lite) #345 #000 var(--lite); display: flex; align-items: center; gap: 18px; padding: 0 0 2px 11px; font: bold 14px/16px "Liberation Serif", serif; }
.checklist h2 { border: 1px solid #000; height: 21px; line-height: 18px; flex: none; }
.clbody { flex: 1; min-height: 0; display: flex; justify-content: space-between; padding: 2px 3px 0 2px; background: var(--teal); }
.items { width: 356px; overflow: hidden; border: 2px solid #2c7766; border-right: 0; border-bottom: 0; }
article { height: 119px; border: 1px solid #000; border-bottom-width: 3px; border-right-width: 2px; background: var(--cyan); display: flex; flex-direction: column; font-weight: normal; }
.r1 { display: flex; align-items: center; height: 35px; padding: 0 1px 0 2px; }
.r1 b { font: bold 15px/18px "Liberation Serif", serif; width: 101px; margin: 0 3px 0 5px; overflow: hidden; white-space: nowrap; flex: none; }
.r1 input[type=checkbox] { appearance: none; width: 13px; height: 13px; border: 2px solid; border-color: var(--dark) var(--lite) var(--lite) var(--dark); margin: 0 19px 8px 0; background: #c8ecec linear-gradient(#c0004c, #c0004c) 2px 4px / 2px 3px no-repeat; position: relative; flex: none; }
.r1 input[type=checkbox]::after { content: ""; position: absolute; left: 2px; top: -3px; width: 4px; height: 9px; border: solid #c0004c; border-width: 0 2px 2px 0; transform: rotate(40deg); }
.drill { width: 22px; height: 22px; }
.r1 .btn { width: 43px; height: 30px; border-width: 2px; flex: none; }
.r1 .field { width: 105px; height: 30px; margin: 0 5px; padding-left: 4px; }
.r1 .help { width: 30px; border-width: 3px; margin: 0; }
.help span { border: 1px solid #000; width: 22px; height: 22px; font: bold 20px/21px "Liberation Sans", sans-serif; text-align: center; }
.r2 { display: grid; grid-template-columns: 112px 116px 112px; gap: 5px; padding: 1px 2px 0 1px; height: 28px; }
.r2 .btn { height: 23px; border-width: 2px; font: bold 15px/18px "Liberation Serif", serif; }
.r3 { display: flex; height: 33px; align-items: center; gap: 4px; padding-left: 2px; }
.r3 .btn { width: 30px; height: 30px; flex: none; position: relative; }
.r3 svg { width: 24px; height: 24px; }
.r3 p { flex: 1; text-align: center; line-height: 15px; white-space: nowrap; padding-right: 34px; }
.r3 i { width: 16px; height: 33px; margin-left: -2px; border: 1px solid #000; background: #ff1818; font: bold 13px/30px "Liberation Sans", sans-serif; text-align: center; }
.r3 .good { background: #18e818; }
.k1::after { content: "x"; position: absolute; right: 1px; bottom: 2px; color: #e02020; font: bold 12px/9px "Liberation Sans", sans-serif; }
.k2::after { content: ""; position: absolute; inset: 2px; border: 1px solid #e02020; }
.r4 { flex: 1; background: var(--cream); border-top: 1px solid #000; padding-left: 2px; line-height: 20px; }
.tall { background: #46ac94; }
.tall i { flex: none; height: 410px; background: var(--teal); margin: 1px 0; }
.tall .end { margin-top: auto; }
.wclose { height: 29px; margin: 1px; flex: none; }
.checklist .wclose { font: bold 15px/18px "Liberation Serif", serif; height: 28px; }

/* measure popup */
.measure { left: 1864px; top: 246px; width: 184px; background-color: var(--teal); }
.measure h2 { font: inherit; line-height: 18px; background: var(--cyan); border: 1px solid #000; border-width: 0 1px 1px; height: 17px; }
.measure label { height: 29px; border: 1px solid #000; border-width: 0 2px 2px 2px; background: var(--cyan); display: flex; align-items: center; gap: 7px; padding-left: 6px; white-space: nowrap; }
.mclose { margin-top: 31px; border: 1px solid #000; padding: 2px; height: 29px; }
.mclose .btn { width: 100%; height: 25px; }

/* histogram */
.histo { left: 1384px; top: 379px; width: 463px; }
.hbody { background: var(--teal); padding: 3px 5px 3px; border-bottom: 1px solid #000; }
.htop { display: flex; gap: 2px; height: 288px; }
.hleft { width: 102px; border: 1px solid #000; background: var(--cyan); display: flex; flex-direction: column; }
.radios { height: 138px; padding-top: 3px; border-bottom: 1px solid #000; border-top: 1px solid #000; display: grid; }
.radios label { display: flex; align-items: center; gap: 6px; padding-left: 7px; }
.hlist { display: flex; justify-content: space-between; height: 115px; }
.hlist .sunk { width: 81px; }
.hleft .tags { display: flex; gap: 4px; padding: 2px 1px; }
.hright { flex: 1; border: 2px solid #000; border-top-color: #486; background: var(--cyan); display: flex; flex-direction: column; min-width: 0; }
.chart { height: 167px; flex: none; border-bottom: 3px solid #000; display: flex; flex-direction: column; justify-content: space-between; align-items: center; padding: 3px 0 0; }
.chart em { background: #b4ffff; border: 1px solid #000; box-shadow: 2px 2px #667; padding: 4px 2px 0; line-height: 16px; white-space: nowrap; }
.chart span { align-self: flex-start; padding-left: 28px; font-weight: normal; line-height: 14px; }
.axis { height: 38px; padding: 2px 0 0 4px; }
.axis div { width: 56px; height: 29px; background: #ff1c1c; border: 1px solid #000; font-weight: normal; line-height: 14px; padding: 3px 0 0 18px; white-space: nowrap; }
.hlow { flex: 1; display: flex; border-top: 2px solid #000; }
.hlow .sunk { width: 75px; margin-right: 3px; }
.hlow .vsb svg { height: 10px; }
.reso { flex: 1; border: 1px solid #000; margin-left: 1px; padding: 0 2px; display: flex; flex-direction: column; }
.reso label { text-align: center; line-height: 21px; }
.reso output { padding-left: 22px; line-height: 23px; }
.reso input { appearance: none; width: 100%; height: 15px; background: #82b6b6; border: 2px solid; border-color: var(--dark) var(--lite) var(--lite) var(--dark); }
.reso input::-webkit-slider-thumb { appearance: none; width: 30px; height: 11px; background: linear-gradient(90deg, transparent 13px, #568688 13px, #568688 14px, #c8f4f2 14px, #c8f4f2 15px, transparent 15px), var(--cyan); border: 1px solid; border-color: #c8f4f2 #568688 #568688 #c8f4f2; }
.sash { height: 6px; border-bottom: 1px solid #2c7766; display: flex; justify-content: flex-end; padding-right: 4px; }
.sash i { width: 10px; height: 9px; background: var(--teal); border: 2px solid; border-color: #a6efdb #2c7766 #2c7766 #a6efdb; z-index: 1; }
.map { margin-top: 4px; height: 162px; border: 1px solid #000; outline: 1px solid #a6efdb; display: flex; justify-content: center; align-items: center; }
.map svg { width: 252px; height: 122px; }
.hfoot { display: flex; gap: 4px; align-items: center; margin-top: 2px; height: 42px; }
.hfoot .tag { height: 38px; padding-top: 4px; }
.hfoot p { flex: 1; height: 42px; line-height: 40px; border: 1px solid #000; background: var(--cyan); padding-left: 3px; margin-left: -2px; }
.ic { width: 38px; height: 38px; }
.ic svg { width: 30px; height: 30px; }
.histo .wclose { height: 25px; }

/* results viewer */
.viewer { left: 17px; top: 709px; width: 495px; }
.viewer h2 { height: 28px; border: 3px solid; border-color: var(--lite) #2c7766 #2c7766 var(--lite); line-height: 21px; outline: 1px solid var(--cyan); margin-bottom: 1px; }
.vbody { display: flex; border-top: 1px solid #000; border-bottom: 2px solid #000; height: 261px; }
.vleft { width: 171px; padding-left: 2px; border-right: 2px solid #000; display: flex; flex-direction: column; }
.vhead { display: flex; height: 29px; border-bottom: 1px solid #000; justify-content: space-between; }
.vhead .btn { margin: 1px 3px 1px 1px; padding: 0 1px; font-weight: normal; font-style: italic; }
.vhead .btn:last-child { margin: 1px 1px 1px 3px; }
.vhead em { flex: 1; border: solid #000; border-width: 0 2px; background: var(--cyan); text-align: center; line-height: 28px; }
.vlist { display: flex; justify-content: space-between; gap: 5px; flex: 1; }
.vlist .sunk { flex: 1; }
.vleft .hsb, .vright .hsb { margin: 3px 20px 1px 0; }
.vrep { border-top: 1px solid #000; padding: 2px 2px 2px 4px; height: 32px; }
.vrep .btn { width: 100%; height: 28px; gap: 8px; }
.vright { flex: 1; padding-left: 2px; display: flex; flex-direction: column; min-width: 0; }
.chead { display: flex; align-items: center; height: 31px; }
.chead .cat { width: 206px; height: 28px; }
.chead > span { margin: 0 8px 0 2px; }
.chead .opt { width: 61px; height: 28px; }
.vright .vlist { flex: none; height: 115px; }
.navrow { display: flex; gap: 4px; height: 26px; align-items: center; padding: 0 2px 0 1px; }
.navrow .btn { height: 24px; width: 44px; border-width: 2px; }
.navrow .btn:first-child { width: 53px; }
.navrow .field { flex: 1; height: 24px; padding: 0 0 6px 5px; }
.zoomrow { display: flex; gap: 1px; align-items: center; height: 34px; }
.cell { height: 33px; border: 1px solid #000; display: flex; align-items: center; }
.az { width: 123px; padding: 1px 1px 1px 4px; }
.az .btn { width: 117px; height: 30px; gap: 8px; }
.sv { width: 97px; justify-content: space-between; }
.lime { --face: #18e818; --lite: #70f870; --dark: #108c10; background: var(--face); padding: 0 2px 0 5px; height: 31px; display: flex; align-items: center; }
.lime .btn { width: 61px; height: 28px; }
.lime i { border-color: #c8ffc8 #108c10 #108c10 #c8ffc8; }
.zoomrow label { display: flex; align-items: center; gap: 3px; margin-left: 2px; padding-bottom: 5px; white-space: nowrap; }
.zoomrow input { appearance: none; width: 13px; height: 13px; border: 1px solid; border-color: var(--lite) var(--dark) var(--dark) var(--lite); }
.vright .tags { display: flex; gap: 4px; justify-content: flex-end; padding: 1px 2px 0; }
.info { text-align: center; height: 21px; line-height: 20px; border-bottom: 2px solid #000; }
.erf { background: var(--cream); height: 20px; border: 1px solid #000; border-top: 0; padding-left: 2px; line-height: 20px; }
.viewer footer { display: flex; gap: 4px; padding: 2px; height: 34px; align-items: center; }
.viewer footer .btn { width: 30px; height: 30px; position: relative; }
.viewer footer .close { flex: 1; }
.viewer footer svg { width: 22px; height: 22px; }
.viewer footer span { border: 1px solid #000; width: 22px; height: 22px; font: 10px/20px "Liberation Serif", serif; text-align: center; flex: none; }
.strike svg { position: absolute; }
.viewer footer .num span { background: #0cf01c; font: bold 12px/15px "Liberation Sans", sans-serif; }
sub { font-size: 12px; line-height: 8px; }

/* taskbar */
.taskbar { height: 40px; background: #101010; color: #fff; display: flex; align-items: stretch; font: 12px/18px "Noto Sans", "Noto Sans CJK SC", sans-serif; position: relative; z-index: 2; }
.start { width: 52px; display: flex; align-items: center; justify-content: center; }
.start svg { width: 16px; height: 16px; }
.task { width: 90px; margin: 0 4px; padding: 2px 0 0 3px; display: flex; align-items: center; gap: 5px; overflow: hidden; border-bottom: 2px solid #9fd2f4; font: inherit; flex: none; }
.task svg { width: 23px; height: 23px; }
.on { background: #333; width: 98px; margin: 0; padding-left: 7px; }
.alert { background: #9c5018; border-color: #ff7a10; width: 98px; margin: 0; padding-left: 9px; }
.tray { margin-left: auto; display: flex; align-items: center; gap: 8px; padding-right: 23px; }
.tray svg { width: 16px; height: 16px; }
.tray .ime { margin-left: 4px; }
.tray time { display: flex; flex-direction: column; text-align: center; font-size: 13px; line-height: 19px; width: 72px; }
.tray .note { margin-left: 4px; width: 17px; }
```
